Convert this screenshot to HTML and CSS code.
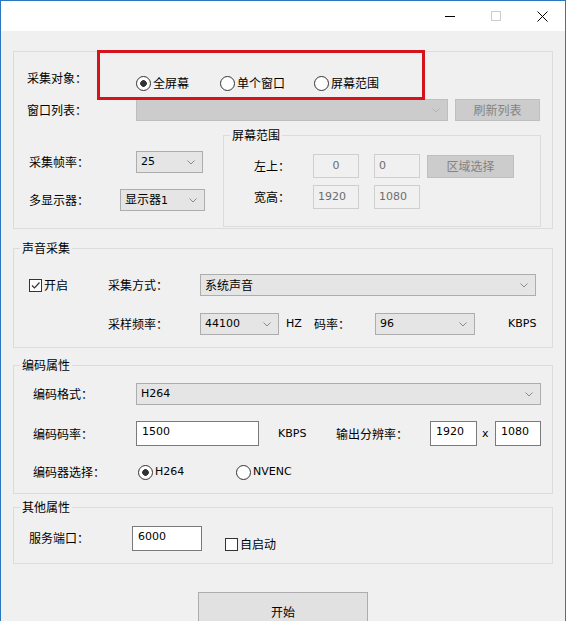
FILE: index.html
```html
<!DOCTYPE html>
<html lang="zh-CN">
<head>
    <meta charset="UTF-8">
    <title>屏幕采集</title>
    <link rel="stylesheet" href="styles.css">
</head>
<body>

<div class="window">
    <div class="titlebar">
        <span class="tb-btn"><svg width="10" height="10"><path d="M0 5.5h10" stroke="#000"/></svg></span>
        <span class="tb-btn"><svg width="10" height="10"><rect x="0.5" y="0.5" width="9" height="9" fill="none" stroke="#cccccc"/></svg></span>
        <span class="tb-btn"><svg width="11" height="11"><path d="M0.5 0.5l10 10M10.5 0.5l-10 10" stroke="#000"/></svg></span>
    </div>

    <div class="content">
        <!-- capture target -->
        <div class="group capture">
            <div class="annot"></div>

            <div class="row row-target">
                <span class="label w109">采集对象：</span>
                <div class="radios">
                    <span class="radio on w84">全屏幕</span>
                    <span class="radio w94">单个窗口</span>
                    <span class="radio">屏幕范围</span>
                </div>
            </div>

            <div class="row row-list">
                <span class="label w109">窗口列表：</span>
                <div class="combo disabled w312"><span></span><svg width="8" height="5"><path d="M0.5 0.5L4 4L7.5 0.5" fill="none" stroke="#b4b4b4"/></svg></div>
                <button class="btn disabled refresh">刷新列表</button>
            </div>

            <div class="row-split">
                <div class="left-col">
                    <div class="row">
                        <span class="label w107">采集帧率：</span>
                        <div class="combo w67"><span class="en">25</span><svg width="8" height="5"><path d="M0.5 0.5L4 4L7.5 0.5" fill="none" stroke="#8a8a8a"/></svg></div>
                    </div>
                    <div class="row row-monitor">
                        <span class="label w91">多显示器：</span>
                        <div class="combo w85"><span>显示器<span class="en">1</span></span><svg width="8" height="5"><path d="M0.5 0.5L4 4L7.5 0.5" fill="none" stroke="#8a8a8a"/></svg></div>
                    </div>
                </div>

                <fieldset class="range">
                    <legend>屏幕范围</legend>
                    <div class="range-body">
                        <div class="range-row">
                            <span class="label w59">左上：</span>
                            <div class="input en center">0</div>
                            <div class="input en second">0</div>
                            <button class="btn disabled area">区域选择</button>
                        </div>
                        <div class="range-row">
                            <span class="label w59">宽高：</span>
                            <div class="input en">1920</div>
                            <div class="input en second">1080</div>
                        </div>
                    </div>
                </fieldset>
            </div>
        </div>

        <!-- audio -->
        <fieldset class="box audio">
            <legend>声音采集</legend>
            <div class="audio-body">
                <div class="enable">
                    <span class="check on"><svg width="11" height="11"><path d="M2 5.5L4.5 8L9.5 2.5" fill="none" stroke="#333" stroke-width="1.2"/></svg></span>开启
                </div>
                <div class="audio-rows">
                    <div class="row">
                        <span class="label w92">采集方式：</span>
                        <div class="combo w336"><span>系统声音</span><svg width="8" height="5"><path d="M0.5 0.5L4 4L7.5 0.5" fill="none" stroke="#8a8a8a"/></svg></div>
                    </div>
                    <div class="row row-rate">
                        <span class="label w92">采样频率：</span>
                        <div class="combo w79"><span class="en">44100</span><svg width="8" height="5"><path d="M0.5 0.5L4 4L7.5 0.5" fill="none" stroke="#8a8a8a"/></svg></div>
                        <span class="unit en hz">HZ</span>
                        <span class="label w61">码率：</span>
                        <div class="combo w100"><span class="en">96</span><svg width="8" height="5"><path d="M0.5 0.5L4 4L7.5 0.5" fill="none" stroke="#8a8a8a"/></svg></div>
                        <span class="unit en kbps">KBPS</span>
                    </div>
                </div>
            </div>
        </fieldset>

        <!-- encoder -->
        <fieldset class="box encode">
            <legend>编码属性</legend>
            <div class="encode-body">
                <div class="row">
                    <span class="label w103">编码格式：</span>
                    <div class="combo w405"><span class="en">H264</span><svg width="8" height="5"><path d="M0.5 0.5L4 4L7.5 0.5" fill="none" stroke="#8a8a8a"/></svg></div>
                </div>
                <div class="row row-bitrate">
                    <span class="label w103">编码码率：</span>
                    <div class="input edit en w123">1500</div>
                    <span class="unit en kbps2">KBPS</span>
                    <span class="label w94">输出分辨率：</span>
                    <div class="input edit en w47">1920</div>
                    <span class="times en">x</span>
                    <div class="input edit en w46">1080</div>
                </div>
                <div class="row row-codec">
                    <span class="label w105">编码器选择：</span>
                    <span class="radio on en w98">H264</span>
                    <span class="radio en">NVENC</span>
                </div>
            </div>
        </fieldset>

        <!-- other -->
        <fieldset class="box other">
            <legend>其他属性</legend>
            <div class="other-body">
                <span class="label w103">服务端口：</span>
                <div class="input edit en w70">6000</div>
                <div class="autostart"><span class="check"></span>自启动</div>
            </div>
        </fieldset>

        <button class="btn start">开始</button>
    </div>
</div>

</body>
</html>
```

FILE: styles.css
```css
* {
    box-sizing: border-box;
}

body {
    margin: 0;
    background-color: #ffffff;
    font-family: "Noto Sans CJK SC", sans-serif;
    font-size: 12px;
    line-height: 16px;
    color: #000;
}

.en {
    font-family: "DejaVu Sans", sans-serif;
    font-size: 11px;
}

.window {
    width: 566px;
    height: 621px;
    border: 1px solid #2b78c2;
    border-bottom: none;
    background-color: #f0f0f0;
    overflow: hidden;
}

.titlebar {
    height: 30px;
    background-color: #fff;
    display: flex;
    justify-content: flex-end;
}

.tb-btn {
    width: 46px;
    display: flex;
    align-items: center;
    justify-content: center;
}

.content {
    padding: 20px 12px 0;
}

/* generic rows */
.row {
    display: flex;
    align-items: center;
    height: 22px;
}

.label {
    flex: none;
    white-space: nowrap;
}

.w59 { width: 59px; }
.w61 { width: 61px; }
.w91 { width: 91px; }
.w92 { width: 92px; }
.w94 { width: 94px; }
.w103 { width: 103px; }
.w105 { width: 105px; }
.w107 { width: 107px; }
.w109 { width: 109px; }

.combo {
    flex: none;
    display: flex;
    align-items: center;
    justify-content: space-between;
    height: 22px;
    border: 1px solid #adadad;
    background-color: #e5e5e5;
    padding: 0 7px 0 4px;
    white-space: nowrap;
}

.combo.disabled {
    background-color: #cccccc;
    border-color: #bfbfbf;
}

.combo.w67 { width: 67px; }
.combo.w79 { width: 79px; }
.combo.w85 { width: 85px; }
.combo.w100 { width: 100px; }
.combo.w312 { width: 312px; }
.combo.w336 { width: 336px; }
.combo.w405 { width: 405px; }

.input {
    flex: none;
    width: 46px;
    height: 24px;
    border: 1px solid #cfcfcf;
    background-color: #f0f0f0;
    color: #6d6d6d;
    padding: 3px 4px 0;
    white-space: nowrap;
}

.input.center {
    text-align: center;
}

.input.second {
    margin-left: 15px;
}

.input.edit {
    height: 25px;
    background-color: #fff;
    border-color: #7a7a7a;
    color: #000;
    padding: 2px 5px 0;
}

.input.w46 { width: 46px; }
.input.w47 { width: 47px; }
.input.w70 { width: 70px; }
.input.w123 { width: 123px; }

.btn {
    font-family: "Noto Sans CJK SC", sans-serif;
    font-size: 12px;
    line-height: 16px;
    border: 1px solid #adadad;
    background-color: #e1e1e1;
    color: #000;
    padding: 0;
}

.btn.disabled {
    background-color: #cccccc;
    border-color: #bfbfbf;
    color: #838383;
}

.radio {
    display: flex;
    align-items: center;
    flex: none;
}

.radio::before {
    content: "";
    width: 13px;
    height: 13px;
    border: 1px solid #333;
    border-radius: 50%;
    background-color: #fff;
    margin-right: 2px;
}

.radio.on::before {
    background: radial-gradient(circle, #333 0 3px, #fff 3.6px);
}

.radio.w84 { width: 84px; }
.radio.w94 { width: 94px; }
.radio.w98 { width: 98px; }

.check {
    display: inline-flex;
    align-items: center;
    justify-content: center;
    width: 13px;
    height: 13px;
    border: 1px solid #333;
    background-color: #fff;
    margin-right: 2px;
}

/* group boxes */
.group {
    position: relative;
    border: 1px solid #dcdcdc;
}

fieldset {
    margin: 0;
    padding: 0;
    min-width: 0;
    border: 1px solid #dcdcdc;
}

legend {
    margin-left: 6px;
    padding: 0 2px;
    line-height: 14px;
}

.annot {
    position: absolute;
    left: 83px;
    top: -2px;
    width: 328px;
    height: 50px;
    border: 3px solid #d4141a;
}

.capture {
    padding: 18px 0 1px;
}

.row-target {
    align-items: flex-start;
    padding-left: 13px;
}

.radios {
    display: flex;
    margin-top: 5px;
}

.row-list {
    margin-top: 7px;
    padding-left: 13px;
}

.refresh {
    width: 85px;
    height: 22px;
    margin-left: 7px;
}

.row-split {
    display: flex;
    margin-top: 7px;
}

.left-col {
    width: 209px;
    padding: 23px 0 0 15px;
}

.row-monitor {
    margin-top: 16px;
}

.range {
    width: 318px;
    flex: none;
}

.range-body {
    padding: 12px 0 17px 30px;
}

.range-row {
    display: flex;
    align-items: center;
    height: 24px;
}

.range-row + .range-row {
    margin-top: 7px;
}

.area {
    width: 87px;
    height: 23px;
    margin-left: 7px;
}

/* audio */
.audio {
    margin-top: 12px;
}

.audio-body {
    display: flex;
    padding: 19px 0 12px;
}

.enable {
    width: 94px;
    height: 22px;
    padding-left: 15px;
    display: flex;
    align-items: center;
}

.row-rate {
    margin-top: 17px;
}

.hz {
    width: 35px;
    padding-left: 7px;
}

.kbps {
    margin-left: 33px;
}

/* encoder */
.encode {
    margin-top: 10px;
}

.encode-body {
    padding: 11px 0 13px 19px;
}

.row-bitrate {
    margin-top: 16px;
    height: 25px;
}

.kbps2 {
    width: 77px;
    padding-left: 19px;
}

.times {
    width: 18px;
    padding-left: 5px;
}

.row-codec {
    margin-top: 18px;
    height: 16px;
}

/* other */
.other {
    margin-top: 6px;
}

.other-body {
    display: flex;
    align-items: flex-start;
    height: 49px;
    padding: 12px 0 0 15px;
}

.other-body .label {
    line-height: 24px;
}

.autostart {
    display: flex;
    align-items: center;
    margin: 10px 0 0 23px;
}

.start {
    display: block;
    width: 170px;
    height: 40px;
    margin: 28px auto 0;
}
```
